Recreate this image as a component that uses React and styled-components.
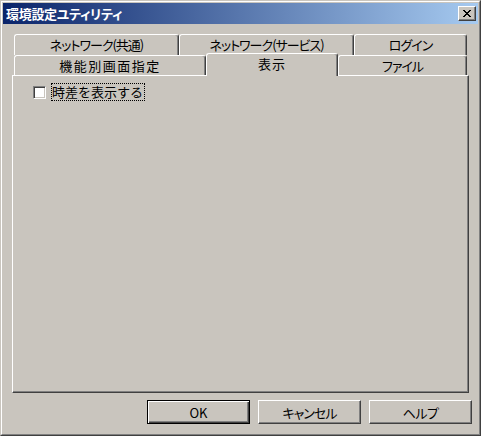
import React from "react";
import styled, { createGlobalStyle, css } from "styled-components";

const FACE = "#C9C5BE";
const FONT = `"Noto Sans CJK JP", "Noto Sans", sans-serif`;

const GlobalStyle = createGlobalStyle`
  html, body { margin: 0; padding: 0; background: #ffffff; }
  body { font-family: ${FONT}; }
  * { box-sizing: border-box; }
`;

const Window = styled.div`
  width: 481px;
  height: 436px;
  background: ${FACE};
  border: 1px solid;
  border-color: ${FACE} #404040 #404040 ${FACE};
  display: flex;
  flex-direction: column;
`;

const WindowInner = styled.div`
  flex: 1;
  border: 1px solid;
  border-color: #ffffff #808080 #808080 #ffffff;
  padding: 1px;
  display: flex;
  flex-direction: column;
`;

const TitleBar = styled.div`
  height: 21px;
  flex: none;
  display: flex;
  align-items: center;
  justify-content: space-between;
  padding: 0 2px 0 3px;
  background: linear-gradient(to right, #0a246a, #a6caf0);
`;

const TitleText = styled.span`
  color: #ffffff;
  font-weight: bold;
  font-size: 13px;
  line-height: 1;
  font-feature-settings: "palt";
  letter-spacing: -0.3px;
`;

const CloseButton = styled.div`
  width: 18px;
  height: 15px;
  background: ${FACE};
  border: 1px solid;
  border-color: #ffffff #404040 #404040 #ffffff;
  box-shadow: inset -1px -1px 0 #808080;
  display: flex;
  align-items: center;
  justify-content: center;
`;

const Body = styled.div`
  flex: 1;
  display: flex;
  flex-direction: column;
  padding: 10px 0 9px 0;
`;

const TabControl = styled.div`
  flex: 1;
  display: flex;
  flex-direction: column;
  margin: 0 9px;
`;

const TabRow = styled.div`
  display: flex;
  height: ${(p) => p.$h}px;
  padding: 0 2px;
  flex: none;
`;

const Tab = styled.div`
  width: ${(p) => p.$w}px;
  flex: none;
  height: 100%;
  background: ${FACE};
  border-top: 1px solid #ffffff;
  border-left: 1px solid #ffffff;
  border-right: 1px solid #404040;
  border-radius: 3px 3px 0 0;
  box-shadow: inset -1px 0 0 #808080;
  display: flex;
  align-items: center;
  justify-content: center;
  font-size: 13px;
  line-height: 1;
  color: #000;
  font-feature-settings: "palt";
  letter-spacing: ${(p) => p.$ls || 0}px;
  padding-bottom: 1px;
  ${(p) =>
    p.$selected &&
    css`
      position: relative;
      z-index: 1;
      margin-top: -2px;
      height: calc(100% + 3px);
      padding-bottom: 4px;
    `}
`;

const Panel = styled.div`
  flex: 1;
  border: 1px solid;
  border-color: #ffffff #404040 #404040 #ffffff;
  box-shadow: inset -1px -1px 0 #808080;
  padding: 7px 0 0 20px;
`;

const CheckRow = styled.div`
  display: flex;
  align-items: center;
  height: 18px;
`;

const CheckBox = styled.span`
  width: 13px;
  height: 13px;
  flex: none;
  background: #ffffff;
  border: 1px solid;
  border-color: #808080 #ffffff #ffffff #808080;
  box-shadow: inset 1px 1px 0 #404040, inset -1px -1px 0 ${FACE};
`;

const CheckLabel = styled.span`
  margin-left: 5px;
  padding: 1px 2px 2px 1px;
  outline: 1px dotted #000;
  outline-offset: -1px;
  font-size: 13px;
  line-height: 15px;
  color: #000;
`;

const ButtonRow = styled.div`
  flex: none;
  display: flex;
  justify-content: flex-end;
  gap: 8px;
  margin-top: 7px;
  padding-right: 6px;
`;

const Button = styled.div`
  width: 103px;
  height: 24px;
  background: ${FACE};
  border: 1px solid;
  border-color: #ffffff #404040 #404040 #ffffff;
  box-shadow: inset -1px -1px 0 #808080;
  display: flex;
  align-items: center;
  justify-content: center;
  font-size: 13px;
  line-height: 1;
  color: #000;
  font-feature-settings: "palt";
  letter-spacing: ${(p) => p.$ls || 0}px;
  ${(p) =>
    p.$default &&
    css`
      border-color: #000;
      box-shadow: inset 1px 1px 0 #ffffff, inset -1px -1px 0 #404040,
        inset -2px -2px 0 #808080;
    `}
`;

const CloseIcon = () => (
  <svg width="8" height="7" viewBox="0 0 8 7" shapeRendering="crispEdges">
    <path
      d="M0 0h2v1h-2zM6 0h2v1h-2zM1 1h2v1h-2zM5 1h2v1h-2zM2 2h4v1h-4zM3 3h2v1h-2zM2 4h4v1h-4zM1 5h2v1h-2zM5 5h2v1h-2zM0 6h2v1h-2zM6 6h2v1h-2z"
      fill="#000"
    />
  </svg>
);

export default function App() {
  return (
    <>
      <GlobalStyle />
      <Window>
        <WindowInner>
          <TitleBar>
            <TitleText>環境設定ユティリティ</TitleText>
            <CloseButton>
              <CloseIcon />
            </CloseButton>
          </TitleBar>
          <Body>
            <TabControl>
              <TabRow $h={21}>
                <Tab $w={165} $ls={-1}>ネットワーク(共通)</Tab>
                <Tab $w={175} $ls={-1}>ネットワーク(サービス)</Tab>
                <Tab $w={113} $ls={-1}>ログイン</Tab>
              </TabRow>
              <TabRow $h={20}>
                <Tab $w={192} $ls={1.5}>機能別画面指定</Tab>
                <Tab $w={132} $ls={1} $selected>
                  表示
                </Tab>
                <Tab $w={129} $ls={-1}>ファイル</Tab>
              </TabRow>
              <Panel>
                <CheckRow>
                  <CheckBox />
                  <CheckLabel>時差を表示する</CheckLabel>
                </CheckRow>
              </Panel>
            </TabControl>
            <ButtonRow>
              <Button $default>OK</Button>
              <Button $ls={-1}>キャンセル</Button>
              <Button $ls={-0.5}>ヘルプ</Button>
            </ButtonRow>
          </Body>
        </WindowInner>
      </Window>
    </>
  );
}
